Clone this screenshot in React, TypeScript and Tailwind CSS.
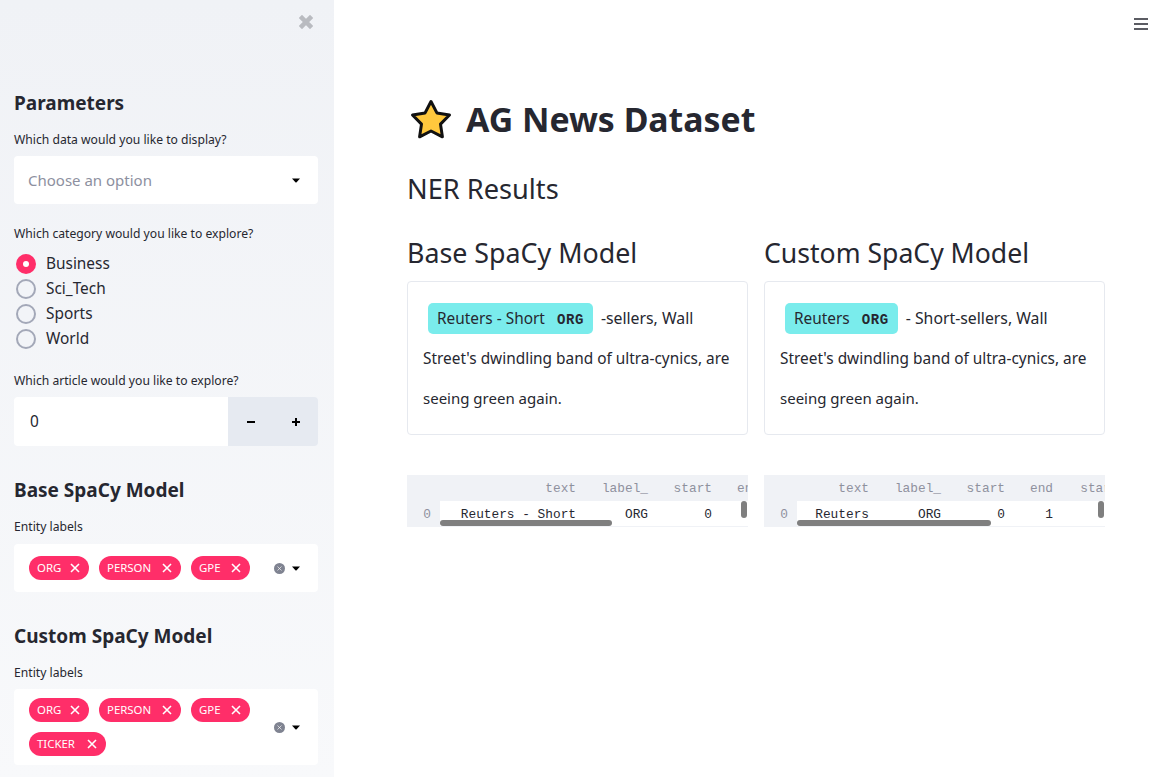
import React from "react";

const sans = "font-['Noto_Sans',sans-serif]";
const mono = "font-['Liberation_Mono',monospace]";

function Caret() {
  return (
    <svg width="8" height="5" viewBox="0 0 8 5" className="shrink-0">
      <path d="M0 0.5 H8 L4.6 4.3 Q4 4.8 3.4 4.3 Z" fill="#000" />
    </svg>
  );
}

function X({ size = 10, color = "#fff", sw = 1.6 }: { size?: number; color?: string; sw?: number }) {
  return (
    <svg width={size} height={size} viewBox="0 0 10 10" className="shrink-0">
      <path d="M1 1 L9 9 M9 1 L1 9" stroke={color} strokeWidth={sw} fill="none" />
    </svg>
  );
}

function Tag({ label, w }: { label: string; w: string }) {
  return (
    <span className={`h-6 rounded-full bg-[#ff2e69] text-white flex items-center justify-between pl-2 pr-[9px] text-[11.4px] ${w}`}>
      <span>{label}</span>
      <X />
    </span>
  );
}

function ClearAndCaret() {
  return (
    <div className="flex items-center gap-[7px] shrink-0 mr-[18px]">
      <span className="w-[11px] h-[11px] rounded-full bg-[#7f8391] flex items-center justify-center">
        <X size={5} sw={1.3} />
      </span>
      <Caret />
    </div>
  );
}

function Label({ children, className = "" }: { children: React.ReactNode; className?: string }) {
  return <div className={`text-[12.15px] leading-4 text-[#262730] ${className}`}>{children}</div>;
}

function SideHeading({ children, className = "" }: { children: React.ReactNode; className?: string }) {
  return <div className={`text-[19px] leading-6 font-bold text-[#262730] ${className}`}>{children}</div>;
}

function Radio({ label, on }: { label: string; on?: boolean }) {
  return (
    <div className="h-[25px] flex items-center gap-[10px] pl-[2px]">
      {on ? (
        <span className="w-5 h-5 rounded-full bg-[#ff2e69] flex items-center justify-center">
          <span className="w-[6px] h-[6px] rounded-full bg-white" />
        </span>
      ) : (
        <span className="w-5 h-5 rounded-full border-2 border-[#a3a8b8] bg-[#f2f4f8]" />
      )}
      <span className="text-[15.4px] leading-5 text-[#262730]">{label}</span>
    </div>
  );
}

function Sidebar() {
  return (
    <aside className="w-[334px] shrink-0 h-[777px] overflow-hidden bg-gradient-to-b from-[#f0f2f6] to-[#f8f9fb] pl-[14px] pr-[16px] relative">
      <div className="absolute left-[299px] top-[15px]">
        <X size={14} color="#b9bbc0" sw={3.2} />
      </div>
      <SideHeading className="pt-[91px]">Parameters</SideHeading>
      <Label className="mt-[17px]">Which data would you like to display?</Label>
      <div className="mt-[8px] h-12 bg-white rounded flex items-center justify-between pl-[14px] pr-[18px]">
        <span className="text-[15px] text-[#8d90a0]">Choose an option</span>
        <Caret />
      </div>
      <Label className="mt-[22px]">Which category would you like to explore?</Label>
      <div className="mt-[9px]">
        <Radio label="Business" on />
        <Radio label="Sci_Tech" />
        <Radio label="Sports" />
        <Radio label="World" />
      </div>
      <Label className="mt-[22px]">Which article would you like to explore?</Label>
      <div className="mt-[8px] h-[49px] flex rounded overflow-hidden">
        <div className="flex-1 bg-white flex items-center pl-4 text-[15.4px] text-[#262730]">0</div>
        <div className="w-[90px] bg-[#e6eaf1] flex items-center font-bold text-[#000]">
          <span className="w-[45px] flex justify-center"><span className="w-2 h-[2px] bg-black" /></span>
          <span className="w-[45px] flex justify-center relative h-2 items-center">
            <span className="w-2 h-[2px] bg-black" />
            <span className="absolute w-[2px] h-2 bg-black" />
          </span>
        </div>
      </div>
      <SideHeading className="mt-[32px]">Base SpaCy Model</SideHeading>
      <Label className="mt-[17px]">Entity labels</Label>
      <div className="mt-[9px] h-12 bg-white rounded flex items-center justify-between pl-[15px]">
        <div className="flex gap-[10px]">
          <Tag label="ORG" w="w-[60px]" />
          <Tag label="PERSON" w="w-[82px]" />
          <Tag label="GPE" w="w-[59px]" />
        </div>
        <ClearAndCaret />
      </div>
      <SideHeading className="mt-[32px]">Custom SpaCy Model</SideHeading>
      <Label className="mt-[17px]">Entity labels</Label>
      <div className="mt-[8px] h-[76px] bg-white rounded flex items-center justify-between pl-[15px]">
        <div className="flex flex-wrap gap-x-[10px] gap-y-[10px] w-[240px]">
          <Tag label="ORG" w="w-[60px]" />
          <Tag label="PERSON" w="w-[82px]" />
          <Tag label="GPE" w="w-[59px]" />
          <Tag label="TICKER" w="w-[77px]" />
        </div>
        <ClearAndCaret />
      </div>
    </aside>
  );
}

function Card({ ent, rest }: { ent: string; rest: string }) {
  return (
    <div className="h-[154px] border border-[#e6e9ef] rounded pl-[15px] pr-4 pt-[16px] text-[15.4px] leading-10 text-[#262730] whitespace-nowrap">
      <div className="h-10 flex items-center">
        <span className="ml-[5px] h-[31px] bg-[#7aecec] rounded-[5px] pl-[9px] pr-[9px] flex items-baseline leading-[31px] text-[15.4px]">
          {ent}
          <span className={`${mono} ml-3 text-[14px] tracking-[0.6px] font-bold`}>ORG</span>
        </span>
        <span className="ml-2 text-[15.8px]">{rest}</span>
      </div>
      <div className="leading-[41px] h-10">Street's dwindling band of ultra-cynics, are</div>
      <div className="text-[15px]">seeing green again.</div>
    </div>
  );
}

type Col = { t: string; w: string; v: string };

function DataTable({ cols, bar }: { cols: Col[]; bar: string }) {
  return (
    <div className={`mt-10 h-[52px] relative overflow-hidden ${mono} text-[12.8px] leading-[28px] border-b border-[#f0f2f6]`}>
      <div className="h-[26px] bg-[#f0f2f6] flex text-[#8f919e] whitespace-nowrap">
        <span className="w-[33px] shrink-0" />
        {cols.map((c) => (
          <span key={c.t} className={`${c.w} shrink-0 text-right`}>{c.t}</span>
        ))}
      </div>
      <div className="h-[26px] flex whitespace-nowrap text-[#262730]">
        <span className="w-[33px] shrink-0 bg-[#f0f2f6] text-[#8f919e] text-right pr-[9px]">0</span>
        {cols.map((c) => (
          <span key={c.t} className={`${c.w} shrink-0 text-right`}>{c.v}</span>
        ))}
      </div>
      <div className={`absolute left-[33px] bottom-0 h-[6px] rounded-full bg-[#7f7f7f] ${bar}`} />
      <div className="absolute right-[1px] top-[26px] w-[6px] h-[17px] rounded-full bg-[#7f7f7f]" />
    </div>
  );
}

export default function App() {
  return (
    <div className={`${sans} w-[1175px] h-[777px] overflow-hidden flex bg-white text-[#262730]`}>
      <Sidebar />
      <main className="flex-1 relative pl-[73px] pr-[70px]">
        <svg width="16" height="14" viewBox="0 0 16 14" className="absolute left-[799px] top-[17px]">
          <path d="M1 2 H15 M1 7 H15 M1 12 H15" stroke="#262730" strokeWidth="1.6" />
        </svg>
        <div className="pt-[96px] h-[146px] flex items-start gap-[13px]">
          <svg width="44" height="44" viewBox="0 0 44 44" className="ml-[2px] mt-[2px] shrink-0">
            <path
              d="M22 3.5 L27.9 14.9 L40.5 17 L31.5 26.1 L33.4 38.8 L22 33 L10.6 38.8 L12.5 26.1 L3.5 17 L16.1 14.9 Z"
              fill="#ffc83d"
              stroke="#111"
              strokeWidth="3"
              strokeLinejoin="round"
            />
          </svg>
          <h1 className="text-[33.8px] leading-[46px] font-bold text-[#262730]">AG News Dataset</h1>
        </div>
        <h2 className="text-[27.2px] leading-9 text-[#262730] mt-[25px]">NER Results</h2>
        <div className="grid grid-cols-2 gap-4 mt-[28px]">
          <div>
            <h3 className="text-[26.8px] leading-9 mb-[10px]">Base SpaCy Model</h3>
            <Card ent="Reuters - Short" rest="-sellers, Wall" />
            <DataTable
              bar="w-[172px]"
              cols={[
                { t: "text", w: "w-[136px]", v: "Reuters - Short" },
                { t: "label_", w: "w-[72px]", v: "ORG" },
                { t: "start", w: "w-[64px]", v: "0" },
                { t: "end", w: "w-[48px]", v: "1" },
              ]}
            />
          </div>
          <div>
            <h3 className="text-[26.6px] leading-9 mb-[10px]">Custom SpaCy Model</h3>
            <Card ent="Reuters" rest="- Short-sellers, Wall" />
            <DataTable
              bar="w-[194px]"
              cols={[
                { t: "text", w: "w-[72px]", v: "Reuters" },
                { t: "label_", w: "w-[72px]", v: "ORG" },
                { t: "start", w: "w-[64px]", v: "0" },
                { t: "end", w: "w-[48px]", v: "1" },
                { t: "start_char", w: "w-[104px]", v: "0" },
              ]}
            />
          </div>
        </div>
      </main>
    </div>
  );
}
